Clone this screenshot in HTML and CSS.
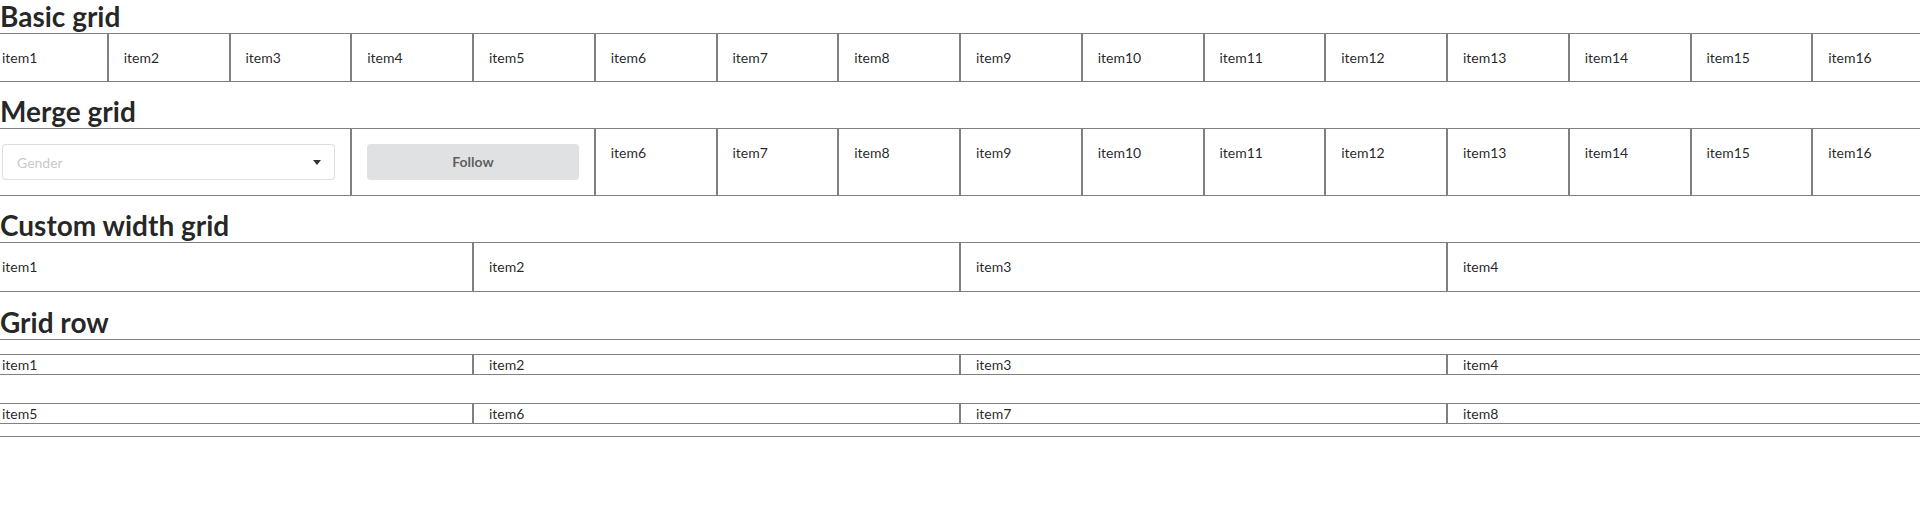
FILE: index.html
```html
<!DOCTYPE html>
<html lang="en">
<head>
<meta charset="utf-8">
<title>Grid</title>
<link rel="stylesheet" href="styles.css">
</head>
<body>
<div class="page">
  <section class="section">
    <h2 class="title">Basic grid</h2>
    <div class="grid">
      <div class="cell">item1</div>
      <div class="cell">item2</div>
      <div class="cell">item3</div>
      <div class="cell">item4</div>
      <div class="cell">item5</div>
      <div class="cell">item6</div>
      <div class="cell">item7</div>
      <div class="cell">item8</div>
      <div class="cell">item9</div>
      <div class="cell">item10</div>
      <div class="cell">item11</div>
      <div class="cell">item12</div>
      <div class="cell">item13</div>
      <div class="cell">item14</div>
      <div class="cell">item15</div>
      <div class="cell">item16</div>
    </div>
  </section>

  <section class="section">
    <h2 class="title">Merge grid</h2>
    <div class="grid">
      <div class="cell span-3">
        <div class="dropdown">
          <span class="placeholder">Gender</span>
          <svg class="caret" width="8" height="5" viewBox="0 0 8 5"><path d="M0 0 H8 L4 5 Z" fill="rgba(0,0,0,0.8)"/></svg>
        </div>
      </div>
      <div class="cell span-2">
        <button class="button" type="button">Follow</button>
      </div>
      <div class="cell">item6</div>
      <div class="cell">item7</div>
      <div class="cell">item8</div>
      <div class="cell">item9</div>
      <div class="cell">item10</div>
      <div class="cell">item11</div>
      <div class="cell">item12</div>
      <div class="cell">item13</div>
      <div class="cell">item14</div>
      <div class="cell">item15</div>
      <div class="cell">item16</div>
    </div>
  </section>

  <section class="section custom">
    <h2 class="title">Custom width grid</h2>
    <div class="grid">
      <div class="cell span-4">item1</div>
      <div class="cell span-4">item2</div>
      <div class="cell span-4">item3</div>
      <div class="cell span-4">item4</div>
    </div>
  </section>

  <section class="section">
    <h2 class="title">Grid row</h2>
    <div class="row-box">
      <div class="grid thin">
        <div class="cell span-4">item1</div>
        <div class="cell span-4">item2</div>
        <div class="cell span-4">item3</div>
        <div class="cell span-4">item4</div>
      </div>
      <div class="grid thin">
        <div class="cell span-4">item5</div>
        <div class="cell span-4">item6</div>
        <div class="cell span-4">item7</div>
        <div class="cell span-4">item8</div>
      </div>
    </div>
  </section>
</div>
</body>
</html>
```

FILE: styles.css
```css
html, body {
  margin: 0;
  padding: 0;
  background: #ffffff;
}

body {
  font-family: Lato, "Liberation Sans", sans-serif;
  font-size: 14px;
  line-height: 17px;
  color: rgba(0, 0, 0, 0.87);
}

.page {
  overflow: hidden;
  width: 100%;
}

.section {
  margin-bottom: 13px;
}

.section.custom {
  margin-bottom: 14px;
}

.custom .cell {
  padding-bottom: 16px;
}

.title {
  margin: 0;
  font-size: 28px;
  line-height: 33px;
  font-weight: 700;
  color: rgba(0, 0, 0, 0.87);
}

.grid {
  display: grid;
  grid-template-columns: repeat(16, 1fr);
  margin: 0 -14px;
}

.cell {
  box-sizing: border-box;
  border: 1px solid #808080;
  padding: 15px;
  min-width: 0;
}

.span-2 { grid-column: span 2; }
.span-3 { grid-column: span 3; }
.span-4 { grid-column: span 4; }

.dropdown {
  box-sizing: border-box;
  display: flex;
  align-items: center;
  justify-content: space-between;
  height: 36px;
  padding: 0 14px;
  border: 1px solid rgba(34, 36, 38, 0.15);
  border-radius: 4px;
  background: #ffffff;
}

.placeholder {
  color: rgba(191, 191, 191, 0.87);
}

.caret {
  display: block;
  margin-right: -1px;
}

.button {
  display: block;
  width: 100%;
  height: 36px;
  margin: 0;
  padding: 0 21px;
  border: 0;
  border-radius: 4px;
  background: #e0e1e2;
  color: rgba(0, 0, 0, 0.6);
  font-family: Lato, "Liberation Sans", sans-serif;
  font-size: 14px;
  font-weight: 700;
  line-height: 14px;
}

.row-box {
  border-top: 1px solid #808080;
  border-bottom: 1px solid #808080;
  padding: 14px 0 12px;
  display: flex;
  flex-direction: column;
  gap: 28px;
}

.thin .cell {
  padding: 1px 15px 1px;
}
```
